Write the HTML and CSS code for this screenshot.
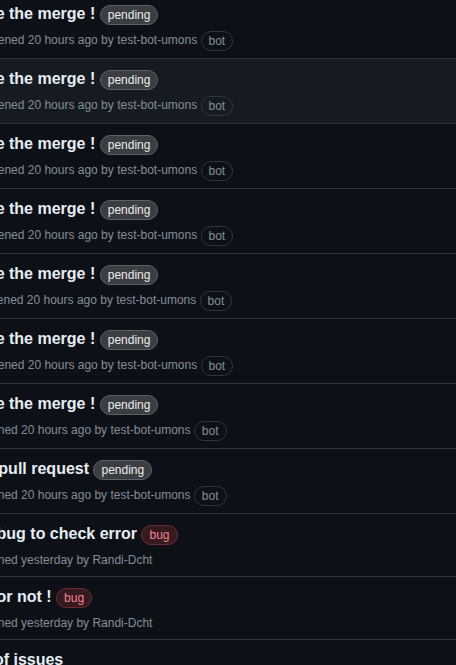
FILE: index.html
```html
<!DOCTYPE html>
<html lang="en">
<head>
<meta charset="utf-8">
<title>Issues</title>
<link rel="stylesheet" href="styles.css">
</head>
<body>
<div class="list">
  <div class="row">
    <div class="title">Force the merge ! <span class="label label-pending">pending</span></div>
    <div class="meta">#15 opened 20 hours ago by test-bot-umons <span class="label label-bot">bot</span></div>
  </div>
  <div class="row row-hover">
    <div class="title">Force the merge ! <span class="label label-pending">pending</span></div>
    <div class="meta">#14 opened 20 hours ago by test-bot-umons <span class="label label-bot">bot</span></div>
  </div>
  <div class="row">
    <div class="title">Force the merge ! <span class="label label-pending">pending</span></div>
    <div class="meta">#13 opened 20 hours ago by test-bot-umons <span class="label label-bot">bot</span></div>
  </div>
  <div class="row">
    <div class="title">Force the merge ! <span class="label label-pending">pending</span></div>
    <div class="meta">#12 opened 20 hours ago by test-bot-umons <span class="label label-bot">bot</span></div>
  </div>
  <div class="row">
    <div class="title">Force the merge ! <span class="label label-pending">pending</span></div>
    <div class="meta">#11 opened 20 hours ago by test-bot-umons <span class="label label-bot">bot</span></div>
  </div>
  <div class="row">
    <div class="title">Force the merge ! <span class="label label-pending">pending</span></div>
    <div class="meta">#10 opened 20 hours ago by test-bot-umons <span class="label label-bot">bot</span></div>
  </div>
  <div class="row">
    <div class="title">Force the merge ! <span class="label label-pending">pending</span></div>
    <div class="meta">#9 opened 20 hours ago by test-bot-umons <span class="label label-bot">bot</span></div>
  </div>
  <div class="row">
    <div class="title">New pull request <span class="label label-pending">pending</span></div>
    <div class="meta">#8 opened 20 hours ago by test-bot-umons <span class="label label-bot">bot</span></div>
  </div>
  <div class="row">
    <div class="title">Add bug to check error <span class="label label-bug">bug</span></div>
    <div class="meta">#3 opened yesterday by Randi-Dcht</div>
  </div>
  <div class="row">
    <div class="title">Bug or not ! <span class="label label-bug">bug</span></div>
    <div class="meta">#2 opened yesterday by Randi-Dcht</div>
  </div>
  <div class="row">
    <div class="title">List of issues</div>
    <div class="meta">#1 opened yesterday by Randi-Dcht</div>
  </div>
</div>
</body>
</html>
```

FILE: styles.css
```css
html, body {
  margin: 0;
  padding: 0;
  background: #0d1117;
  overflow: hidden;
}

body {
  font-family: "Liberation Sans", Arial, sans-serif;
  color: #e6edf3;
}

.list {
  margin-top: -6px;
  margin-left: -39px;
  width: 600px;
}

.row {
  padding: 8px 16px 7px 0;
  border-bottom: 1px solid #30363d;
}

.row-hover {
  background: #161b22;
}

.title {
  font-size: 16px;
  font-weight: 700;
  line-height: 24px;
  color: #e6edf3;
  white-space: nowrap;
}

.meta {
  margin-top: 5px;
  font-size: 12px;
  line-height: 18px;
  color: #848d97;
  white-space: nowrap;
}

.label {
  display: inline-block;
  box-sizing: border-box;
  height: 20px;
  padding: 0 7px;
  font-size: 12px;
  font-weight: 400;
  line-height: 18px;
  border: 1px solid transparent;
  border-radius: 2em;
  vertical-align: middle;
}

.label-pending {
  background: #3a3d42;
  border-color: #5d6066;
  color: #ececec;
}

.label-bug {
  background: #351a20;
  border-color: #6b2a33;
  color: #f0848c;
}

.label-bot {
  background: transparent;
  border-color: #30363d;
  color: #848d97;
}
```
